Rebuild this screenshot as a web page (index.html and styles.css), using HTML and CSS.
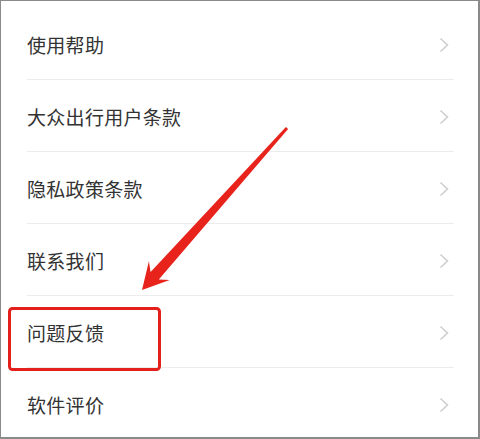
FILE: index.html
```html
<!DOCTYPE html>
<html lang="zh-CN">
<head>
<meta charset="utf-8">
<link rel="stylesheet" href="styles.css">
</head>
<body>
<div class="frame">
  <ul class="menu">
    <li class="item"><span class="label">使用帮助</span><svg class="chev" viewBox="0 0 10 16"><polyline points="1.5,1.5 8.5,8 1.5,14.5"/></svg></li>
    <li class="item"><span class="label">大众出行用户条款</span><svg class="chev" viewBox="0 0 10 16"><polyline points="1.5,1.5 8.5,8 1.5,14.5"/></svg></li>
    <li class="item"><span class="label">隐私政策条款</span><svg class="chev" viewBox="0 0 10 16"><polyline points="1.5,1.5 8.5,8 1.5,14.5"/></svg></li>
    <li class="item"><span class="label">联系我们</span><svg class="chev" viewBox="0 0 10 16"><polyline points="1.5,1.5 8.5,8 1.5,14.5"/></svg></li>
    <li class="item"><span class="label">问题反馈</span><svg class="chev" viewBox="0 0 10 16"><polyline points="1.5,1.5 8.5,8 1.5,14.5"/></svg></li>
    <li class="item"><span class="label">软件评价</span><svg class="chev" viewBox="0 0 10 16"><polyline points="1.5,1.5 8.5,8 1.5,14.5"/></svg></li>
  </ul>
  <svg class="annot" viewBox="0 0 480 439" width="480" height="439">
    <rect class="hl" x="9.5" y="308.5" width="150" height="61" rx="3" ry="3"/>
    <polygon class="arrow" points="142,290 169.7,279.9 158.8,279.5 288.1,129 285.9,127 150.6,272.1 148.9,261.3"/>
  </svg>
</div>
</body>
</html>
```
FILE: styles.css
```css
* { box-sizing: border-box; }
html, body {
  margin: 0;
  padding: 0;
  background: #ffffff;
}
.frame {
  position: relative;
  width: 480px;
  height: 439px;
  overflow: hidden;
  border: 1px solid #8a8a8a;
  border-right-width: 2px;
  border-bottom-width: 2px;
  background: #ffffff;
  font-family: "Noto Sans CJK SC", "Noto Sans", sans-serif;
}
.menu {
  list-style: none;
  margin: 0;
  padding: 7px 0 0 26px;
}
.item {
  display: flex;
  align-items: center;
  justify-content: space-between;
  height: 72px;
  width: 427px;
  padding: 2px 5px 0 0;
  border-bottom: 1px solid #ececec;
}
.label {
  font-size: 19px;
  color: #333333;
  letter-spacing: 0.3px;
}
.chev {
  width: 10px;
  height: 16px;
  fill: none;
  stroke: #cccccc;
  stroke-width: 1.5;
}
.annot {
  position: absolute;
  left: -1px;
  top: -1px;
  pointer-events: none;
}
.hl {
  fill: none;
  stroke: #e3201b;
  stroke-width: 3;
}
.arrow {
  fill: #e8231c;
}
```
